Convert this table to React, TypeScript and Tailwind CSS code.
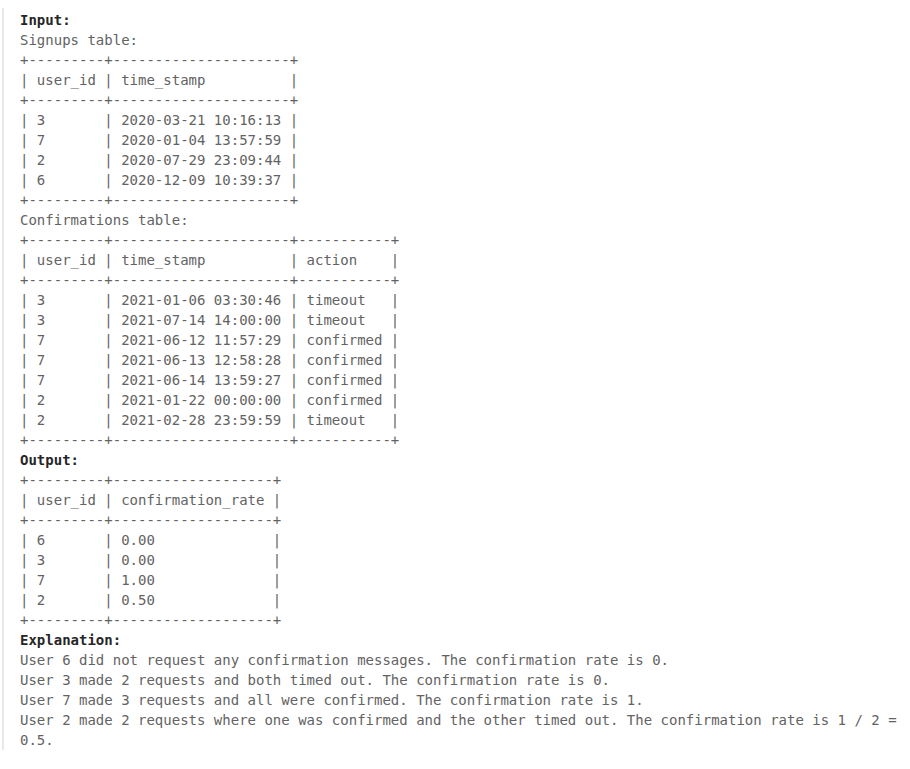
const signups = `+---------+---------------------+
| user_id | time_stamp          |
+---------+---------------------+
| 3       | 2020-03-21 10:16:13 |
| 7       | 2020-01-04 13:57:59 |
| 2       | 2020-07-29 23:09:44 |
| 6       | 2020-12-09 10:39:37 |
+---------+---------------------+`;

const confirmations = `+---------+---------------------+-----------+
| user_id | time_stamp          | action    |
+---------+---------------------+-----------+
| 3       | 2021-01-06 03:30:46 | timeout   |
| 3       | 2021-07-14 14:00:00 | timeout   |
| 7       | 2021-06-12 11:57:29 | confirmed |
| 7       | 2021-06-13 12:58:28 | confirmed |
| 7       | 2021-06-14 13:59:27 | confirmed |
| 2       | 2021-01-22 00:00:00 | confirmed |
| 2       | 2021-02-28 23:59:59 | timeout   |
+---------+---------------------+-----------+`;

const output = `+---------+-------------------+
| user_id | confirmation_rate |
+---------+-------------------+
| 6       | 0.00              |
| 3       | 0.00              |
| 7       | 1.00              |
| 2       | 0.50              |
+---------+-------------------+`;

const explanation = `User 6 did not request any confirmation messages. The confirmation rate is 0.
User 3 made 2 requests and both timed out. The confirmation rate is 0.
User 7 made 3 requests and all were confirmed. The confirmation rate is 1.
User 2 made 2 requests where one was confirmed and the other timed out. The confirmation rate is 1 / 2 = 0.5.`;

export default function App() {
  return (
    <div className="min-h-screen bg-white pt-[8px] pl-[2px]">
      {/* example block */}
      <pre
        className="border-l-2 border-[#e8e8e8] pl-4 pt-[2px] pb-0 text-[14px] leading-[20px] text-[#636363] whitespace-pre-wrap"
        style={{ fontFamily: '"DejaVu Sans Mono", "Liberation Mono", monospace' }}
      >
        <strong className="font-bold text-[#262626]">Input:</strong>
        {"\nSignups table:\n"}
        {signups}
        {"\nConfirmations table:\n"}
        {confirmations}
        {"\n"}
        <strong className="font-bold text-[#262626]">Output:</strong>
        {"\n"}
        {output}
        {"\n"}
        <strong className="font-bold text-[#262626]">Explanation:</strong>
        {"\n"}
        {explanation}
      </pre>
    </div>
  );
}
